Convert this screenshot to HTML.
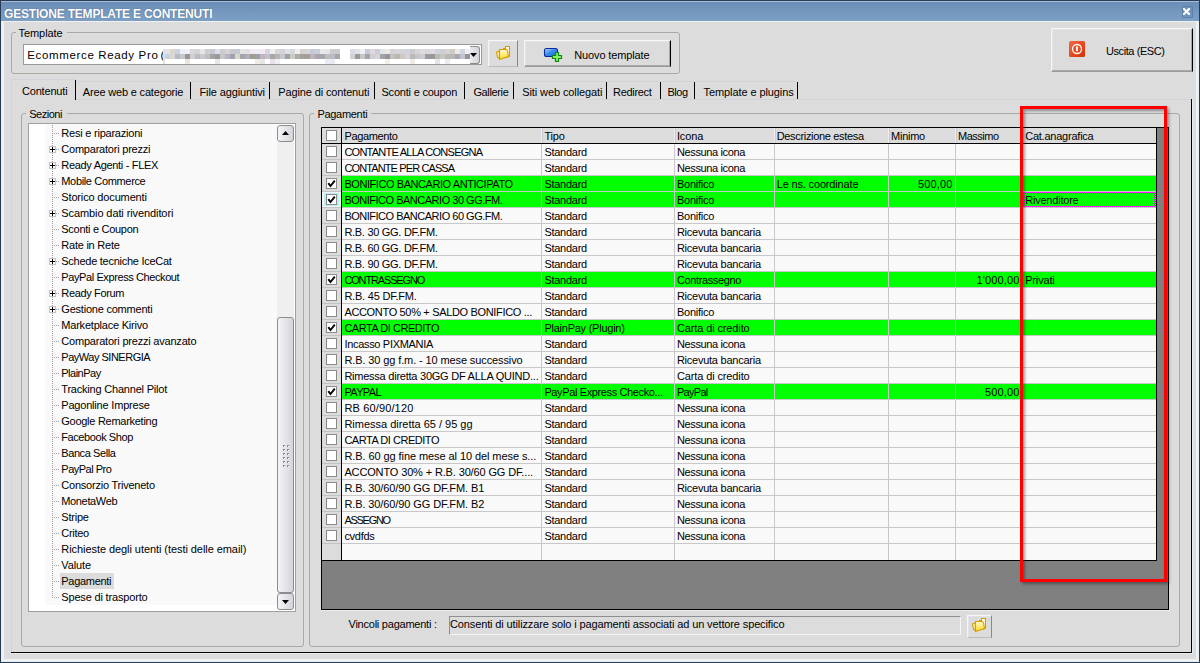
<!DOCTYPE html>
<html><head><meta charset="utf-8"><style>
html,body{margin:0;padding:0;width:1200px;height:663px;overflow:hidden;background:#dcdcdc}
div{position:absolute}
svg{position:absolute}
.t{position:absolute;white-space:pre;font-family:"Liberation Sans",sans-serif;color:#000}
</style></head><body>
<div style="left:0px;top:0px;width:1200px;height:663px;background:#283c54"></div>
<div style="left:1px;top:1px;width:1198px;height:661px;background:#f1f1f1"></div>
<div style="left:1px;top:1px;width:1198px;height:1px;background:#a9bdd6"></div>
<div style="left:1px;top:2px;width:1198px;height:19px;background:linear-gradient(#6a8eb7,#7da0c5)"></div>
<div style="left:1px;top:22px;width:1px;height:640px;background:#e4ecf4"></div>
<div style="left:1198px;top:22px;width:1px;height:640px;background:#e4ecf4"></div>
<div style="left:1px;top:661px;width:1198px;height:1px;background:#e4ecf4"></div>
<div style="left:4px;top:22px;width:1192px;height:637px;background:#dcdcdc"></div>
<span class="t" id="t0" style="left:4px;top:5.84px;font-size:12px;line-height:16px;color:#fff;font-weight:bold;letter-spacing:-0.189px;text-shadow:0 0 1px rgba(20,40,80,.6)">GESTIONE TEMPLATE E CONTENUTI</span>
<div style="left:1182px;top:6px;width:9px;height:10px;border:1px solid #5d7ea6;background:#6f93bc;border-radius:1px"></div>
<svg style="position:absolute;left:1183px;top:8px" width="7" height="7" viewBox="0 0 7 7"><path d="M0.9 0.9 L6.1 6.1 M6.1 0.9 L0.9 6.1" stroke="#fff" stroke-width="2.1" stroke-linecap="square"/></svg>
<div style="left:11px;top:32px;width:667px;height:40px;border:1px solid #a9a9a9;border-radius:3px"></div>
<div style="left:16px;top:28px;width:51px;height:11px;background:#dcdcdc"></div>
<span class="t" id="t1" style="left:18.5px;top:25.19px;font-size:11px;line-height:16px;color:#000;letter-spacing:-0.062px;">Template</span>
<div style="left:23px;top:44px;width:457px;height:19px;border:1px solid #999;background:#fff"></div>
<span class="t" id="t2" style="left:27.3px;top:47.02px;font-size:11.5px;line-height:16px;color:#000;letter-spacing:0.646px;">Ecommerce Ready Pro</span>
<span class="t" id="t3" style="left:160.5px;top:47.02px;font-size:11.5px;line-height:16px;color:#000;letter-spacing:0.470px;">(</span>
<div style="left:163px;top:49px;width:2px;height:15px;background:#d8e4ec"></div>
<div style="left:165px;top:49px;width:5px;height:5px;background:rgb(228,228,230)"></div>
<div style="left:165px;top:54px;width:5px;height:5px;background:rgb(209,209,211)"></div>
<div style="left:170px;top:49px;width:5px;height:5px;background:rgb(218,214,206)"></div>
<div style="left:170px;top:54px;width:5px;height:5px;background:rgb(215,215,217)"></div>
<div style="left:175px;top:49px;width:5px;height:5px;background:rgb(205,209,219)"></div>
<div style="left:175px;top:54px;width:5px;height:5px;background:rgb(182,186,196)"></div>
<div style="left:180px;top:49px;width:5px;height:5px;background:rgb(234,238,248)"></div>
<div style="left:180px;top:54px;width:5px;height:5px;background:rgb(200,200,202)"></div>
<div style="left:185px;top:49px;width:5px;height:5px;background:rgb(239,239,241)"></div>
<div style="left:185px;top:54px;width:5px;height:5px;background:rgb(151,151,153)"></div>
<div style="left:185px;top:59px;width:5px;height:5px;background:rgb(234,230,222)"></div>
<div style="left:190px;top:49px;width:5px;height:5px;background:rgb(215,215,217)"></div>
<div style="left:190px;top:54px;width:5px;height:5px;background:rgb(213,203,215)"></div>
<div style="left:195px;top:49px;width:5px;height:5px;background:rgb(212,212,214)"></div>
<div style="left:195px;top:54px;width:5px;height:5px;background:rgb(187,187,189)"></div>
<div style="left:200px;top:49px;width:5px;height:5px;background:rgb(229,229,231)"></div>
<div style="left:200px;top:54px;width:5px;height:5px;background:rgb(202,202,204)"></div>
<div style="left:205px;top:49px;width:5px;height:5px;background:rgb(205,205,207)"></div>
<div style="left:205px;top:54px;width:5px;height:5px;background:rgb(190,190,192)"></div>
<div style="left:210px;top:49px;width:5px;height:5px;background:rgb(195,199,209)"></div>
<div style="left:210px;top:54px;width:5px;height:5px;background:rgb(163,163,165)"></div>
<div style="left:215px;top:49px;width:5px;height:5px;background:rgb(218,222,232)"></div>
<div style="left:215px;top:54px;width:5px;height:5px;background:rgb(152,152,154)"></div>
<div style="left:215px;top:59px;width:5px;height:5px;background:rgb(231,231,233)"></div>
<div style="left:220px;top:49px;width:5px;height:5px;background:rgb(203,203,205)"></div>
<div style="left:220px;top:54px;width:5px;height:5px;background:rgb(200,200,202)"></div>
<div style="left:225px;top:49px;width:5px;height:5px;background:rgb(212,212,214)"></div>
<div style="left:225px;top:54px;width:5px;height:5px;background:rgb(188,178,190)"></div>
<div style="left:230px;top:49px;width:5px;height:5px;background:rgb(200,200,202)"></div>
<div style="left:230px;top:54px;width:5px;height:5px;background:rgb(159,163,173)"></div>
<div style="left:235px;top:49px;width:5px;height:5px;background:rgb(194,198,208)"></div>
<div style="left:235px;top:54px;width:5px;height:5px;background:rgb(218,214,206)"></div>
<div style="left:240px;top:49px;width:5px;height:5px;background:rgb(228,228,230)"></div>
<div style="left:240px;top:54px;width:5px;height:5px;background:rgb(166,166,168)"></div>
<div style="left:245px;top:49px;width:5px;height:5px;background:rgb(225,225,227)"></div>
<div style="left:245px;top:54px;width:5px;height:5px;background:rgb(171,175,185)"></div>
<div style="left:250px;top:49px;width:5px;height:5px;background:rgb(241,231,243)"></div>
<div style="left:250px;top:54px;width:5px;height:5px;background:rgb(158,154,146)"></div>
<div style="left:255px;top:49px;width:5px;height:5px;background:rgb(238,238,240)"></div>
<div style="left:255px;top:54px;width:5px;height:5px;background:rgb(156,160,170)"></div>
<div style="left:255px;top:59px;width:5px;height:5px;background:rgb(241,237,229)"></div>
<div style="left:260px;top:49px;width:5px;height:5px;background:rgb(243,233,245)"></div>
<div style="left:260px;top:54px;width:5px;height:5px;background:rgb(191,181,193)"></div>
<div style="left:260px;top:59px;width:5px;height:5px;background:rgb(231,231,233)"></div>
<div style="left:265px;top:49px;width:5px;height:5px;background:rgb(209,213,223)"></div>
<div style="left:265px;top:54px;width:5px;height:5px;background:rgb(201,191,203)"></div>
<div style="left:270px;top:49px;width:5px;height:5px;background:rgb(237,237,239)"></div>
<div style="left:270px;top:54px;width:5px;height:5px;background:rgb(167,167,169)"></div>
<div style="left:270px;top:59px;width:5px;height:5px;background:rgb(234,224,236)"></div>
<div style="left:275px;top:49px;width:5px;height:5px;background:rgb(214,214,216)"></div>
<div style="left:275px;top:54px;width:5px;height:5px;background:rgb(181,181,183)"></div>
<div style="left:275px;top:59px;width:5px;height:5px;background:rgb(238,238,240)"></div>
<div style="left:280px;top:49px;width:5px;height:5px;background:rgb(212,212,214)"></div>
<div style="left:280px;top:54px;width:5px;height:5px;background:rgb(199,199,201)"></div>
<div style="left:285px;top:49px;width:5px;height:5px;background:rgb(220,224,234)"></div>
<div style="left:285px;top:54px;width:5px;height:5px;background:rgb(157,161,171)"></div>
<div style="left:290px;top:49px;width:5px;height:5px;background:rgb(215,215,217)"></div>
<div style="left:290px;top:54px;width:5px;height:5px;background:rgb(206,202,194)"></div>
<div style="left:295px;top:49px;width:5px;height:5px;background:rgb(238,238,240)"></div>
<div style="left:295px;top:54px;width:5px;height:5px;background:rgb(172,172,174)"></div>
<div style="left:300px;top:49px;width:5px;height:5px;background:rgb(214,210,202)"></div>
<div style="left:300px;top:54px;width:5px;height:5px;background:rgb(165,161,153)"></div>
<div style="left:305px;top:49px;width:5px;height:5px;background:rgb(213,213,215)"></div>
<div style="left:305px;top:54px;width:5px;height:5px;background:rgb(164,160,152)"></div>
<div style="left:310px;top:49px;width:5px;height:5px;background:rgb(197,201,211)"></div>
<div style="left:310px;top:54px;width:5px;height:5px;background:rgb(190,180,192)"></div>
<div style="left:315px;top:49px;width:5px;height:5px;background:rgb(202,206,216)"></div>
<div style="left:315px;top:54px;width:5px;height:5px;background:rgb(167,167,169)"></div>
<div style="left:320px;top:49px;width:5px;height:5px;background:rgb(233,233,235)"></div>
<div style="left:320px;top:54px;width:5px;height:5px;background:rgb(167,167,169)"></div>
<div style="left:325px;top:49px;width:5px;height:5px;background:rgb(230,230,232)"></div>
<div style="left:325px;top:54px;width:5px;height:5px;background:rgb(189,189,191)"></div>
<div style="left:325px;top:59px;width:5px;height:5px;background:rgb(232,236,246)"></div>
<div style="left:330px;top:49px;width:5px;height:5px;background:rgb(204,204,206)"></div>
<div style="left:330px;top:54px;width:5px;height:5px;background:rgb(184,188,198)"></div>
<div style="left:330px;top:59px;width:5px;height:5px;background:rgb(235,235,237)"></div>
<div style="left:335px;top:49px;width:5px;height:5px;background:rgb(202,202,204)"></div>
<div style="left:335px;top:54px;width:5px;height:5px;background:rgb(166,166,168)"></div>
<div style="left:350px;top:49px;width:5px;height:5px;background:rgb(216,220,230)"></div>
<div style="left:350px;top:54px;width:5px;height:5px;background:rgb(210,210,212)"></div>
<div style="left:355px;top:49px;width:5px;height:5px;background:rgb(226,226,228)"></div>
<div style="left:355px;top:54px;width:5px;height:5px;background:rgb(153,153,155)"></div>
<div style="left:360px;top:49px;width:5px;height:5px;background:rgb(239,239,241)"></div>
<div style="left:360px;top:54px;width:5px;height:5px;background:rgb(198,198,200)"></div>
<div style="left:365px;top:49px;width:5px;height:5px;background:rgb(199,203,213)"></div>
<div style="left:365px;top:54px;width:5px;height:5px;background:rgb(164,164,166)"></div>
<div style="left:370px;top:49px;width:5px;height:5px;background:rgb(225,215,227)"></div>
<div style="left:370px;top:54px;width:5px;height:5px;background:rgb(208,208,210)"></div>
<div style="left:375px;top:49px;width:5px;height:5px;background:rgb(205,205,207)"></div>
<div style="left:375px;top:54px;width:5px;height:5px;background:rgb(209,213,223)"></div>
<div style="left:380px;top:49px;width:5px;height:5px;background:rgb(224,228,238)"></div>
<div style="left:380px;top:54px;width:5px;height:5px;background:rgb(164,164,166)"></div>
<div style="left:385px;top:49px;width:5px;height:5px;background:rgb(237,233,225)"></div>
<div style="left:385px;top:54px;width:5px;height:5px;background:rgb(155,145,157)"></div>
<div style="left:385px;top:59px;width:5px;height:5px;background:rgb(243,239,231)"></div>
<div style="left:390px;top:49px;width:5px;height:5px;background:rgb(210,210,212)"></div>
<div style="left:390px;top:54px;width:5px;height:5px;background:rgb(193,193,195)"></div>
<div style="left:395px;top:49px;width:5px;height:5px;background:rgb(219,209,221)"></div>
<div style="left:395px;top:54px;width:5px;height:5px;background:rgb(188,184,176)"></div>
<div style="left:400px;top:49px;width:5px;height:5px;background:rgb(212,212,214)"></div>
<div style="left:400px;top:54px;width:5px;height:5px;background:rgb(205,201,193)"></div>
<div style="left:405px;top:49px;width:5px;height:5px;background:rgb(207,211,221)"></div>
<div style="left:405px;top:54px;width:5px;height:5px;background:rgb(217,207,219)"></div>
<div style="left:410px;top:49px;width:5px;height:5px;background:rgb(202,202,204)"></div>
<div style="left:410px;top:54px;width:5px;height:5px;background:rgb(185,185,187)"></div>
<div style="left:410px;top:59px;width:5px;height:5px;background:rgb(241,237,229)"></div>
<div style="left:415px;top:49px;width:5px;height:5px;background:rgb(213,213,215)"></div>
<div style="left:415px;top:54px;width:5px;height:5px;background:rgb(198,198,200)"></div>
<div style="left:420px;top:49px;width:5px;height:5px;background:rgb(220,220,222)"></div>
<div style="left:420px;top:54px;width:5px;height:5px;background:rgb(211,201,213)"></div>
<div style="left:425px;top:49px;width:5px;height:5px;background:rgb(217,217,219)"></div>
<div style="left:425px;top:54px;width:5px;height:5px;background:rgb(155,155,157)"></div>
<div style="left:430px;top:49px;width:5px;height:5px;background:rgb(226,216,228)"></div>
<div style="left:430px;top:54px;width:5px;height:5px;background:rgb(152,152,154)"></div>
<div style="left:435px;top:49px;width:5px;height:5px;background:rgb(206,210,220)"></div>
<div style="left:435px;top:54px;width:5px;height:5px;background:rgb(190,186,178)"></div>
<div style="left:435px;top:59px;width:5px;height:5px;background:rgb(228,228,230)"></div>
<div style="left:440px;top:49px;width:5px;height:5px;background:rgb(207,207,209)"></div>
<div style="left:440px;top:54px;width:5px;height:5px;background:rgb(197,197,199)"></div>
<div style="left:445px;top:49px;width:5px;height:5px;background:rgb(212,212,214)"></div>
<div style="left:445px;top:54px;width:5px;height:5px;background:rgb(188,184,176)"></div>
<div style="left:445px;top:59px;width:5px;height:5px;background:rgb(235,235,237)"></div>
<div style="left:450px;top:49px;width:5px;height:5px;background:rgb(208,204,196)"></div>
<div style="left:450px;top:54px;width:5px;height:5px;background:rgb(184,184,186)"></div>
<div style="left:455px;top:49px;width:5px;height:5px;background:rgb(233,233,235)"></div>
<div style="left:455px;top:54px;width:5px;height:5px;background:rgb(174,164,176)"></div>
<div style="left:460px;top:49px;width:5px;height:5px;background:rgb(208,212,222)"></div>
<div style="left:460px;top:54px;width:5px;height:5px;background:rgb(193,197,207)"></div>
<div style="left:465px;top:49px;width:5px;height:5px;background:rgb(240,240,242)"></div>
<div style="left:465px;top:54px;width:5px;height:5px;background:rgb(154,144,156)"></div>
<div style="left:470px;top:46px;width:9px;height:16px;border:1px solid #8c8c8c;border-left:none;border-radius:0 3px 3px 0;background:linear-gradient(90deg,#ececf0,#d2d2d8)"></div>
<svg style="position:absolute;left:470px;top:53px" width="7" height="4"><path d="M0 0 H7 L3.5 4 Z" fill="#000"/></svg>
<div style="left:488px;top:40px;width:30px;height:27px;background:#dcdcdc;border-top:1px solid #f6f6f6;border-left:1px solid #f6f6f6;border-right:1px solid #888;border-bottom:1px solid #bcbcbc;box-sizing:border-box;box-shadow:inset 1px 1px 0 #e2e2ea"></div>
<svg style="position:absolute;left:495px;top:45px" width="16" height="16" viewBox="0 0 16 16">
<defs><linearGradient id="fg1" x1="0" y1="0" x2="0" y2="1"><stop offset="0" stop-color="#fff8d0"/><stop offset=".45" stop-color="#ffec80"/><stop offset="1" stop-color="#ffd820"/></linearGradient></defs>
<path d="M8.5 3.5 H10.5 V1.5 H14.5 V11.5 L9 12.5 Z" fill="#fffbe8" stroke="#d49c00" stroke-width="1.1" stroke-linejoin="round"/>
<path d="M1.5 7 L4.5 6 L4.5 13.5 L2.5 12 Z" fill="#fff2a8" stroke="#d49c00" stroke-width="1.1" stroke-linejoin="round"/>
<path d="M4.5 4.5 H11.5 L12.5 6 L13.5 11.5 L4.5 14.5 Z" fill="url(#fg1)" stroke="#d49c00" stroke-width="1.1" stroke-linejoin="round"/>
</svg>
<div style="left:524px;top:40px;width:147px;height:27px;background:#dcdcdc;border-top:1px solid #f6f6f6;border-left:1px solid #f6f6f6;border-right:1px solid #000;border-bottom:1px solid #9a9a9a;box-sizing:border-box;box-shadow:inset -1px -1px 0 #a8a8a8, inset 1px 1px 0 #e4e4e8"></div>
<svg style="position:absolute;left:543px;top:47px" width="20" height="16" viewBox="0 0 20 16">
<defs><linearGradient id="mon" x1="0" y1="0" x2="1" y2="1"><stop offset="0" stop-color="#b8dcff"/><stop offset=".45" stop-color="#3f8ef0"/><stop offset="1" stop-color="#1a5fd8"/></linearGradient></defs>
<rect x="1.5" y="1.5" width="13" height="8" rx="2" fill="url(#mon)" stroke="#0b2a9c" stroke-width="1.1"/>
<path d="M12.5 5.5 h3 v3 h3 v3 h-3 v3 h-3 v-3 h-3 v-3 h3 z" fill="#8ef066" stroke="#0a8a0a" stroke-width="1.2"/>
</svg>
<span class="t" id="t4" style="left:574.3px;top:47.19px;font-size:11px;line-height:16px;color:#000;letter-spacing:-0.137px;">Nuovo template</span>
<div style="left:1051px;top:28px;width:142px;height:44px;background:#dcdcdc;border-top:1px solid #f6f6f6;border-left:1px solid #f6f6f6;border-right:1px solid #000;border-bottom:1px solid #9a9a9a;box-sizing:border-box;box-shadow:inset -1px -1px 0 #a8a8a8, inset 1px 1px 0 #e4e4e8"></div>
<svg style="position:absolute;left:1069px;top:41px" width="16" height="16" viewBox="0 0 16 16">
<defs><linearGradient id="red" x1="0" y1="0" x2="1" y2="1"><stop offset="0" stop-color="#f26848"/><stop offset=".6" stop-color="#e4461c"/><stop offset="1" stop-color="#cc3208"/></linearGradient></defs>
<rect x="0" y="0" width="16" height="16" rx="1.5" fill="url(#red)"/>
<circle cx="8" cy="8" r="4.5" fill="none" stroke="#fff" stroke-width="1.3"/>
<rect x="7.1" y="5.4" width="1.8" height="4.8" fill="#fff"/>
</svg>
<span class="t" id="t5" style="left:1106px;top:43.19px;font-size:11px;line-height:16px;color:#000;letter-spacing:-0.423px;">Uscita (ESC)</span>
<div style="left:11px;top:99px;width:1181px;height:1px;background:#d2d2da"></div>
<div style="left:11px;top:99px;width:1px;height:554px;background:#d2d2da"></div>
<div style="left:1191px;top:99px;width:1px;height:554px;background:#000"></div>
<div style="left:1192px;top:99px;width:1px;height:555px;background:#ececec"></div>
<div style="left:11px;top:652px;width:1181px;height:1px;background:#000"></div>
<div style="left:11px;top:653px;width:1182px;height:1px;background:#ececec"></div>
<div style="left:11px;top:80px;width:64px;height:20px;background:#dcdcdc"></div>
<div style="left:11px;top:79px;width:64px;height:30px;border-top:1px solid #d2d2da;border-left:1px solid #d2d2da;border-radius:3px 0 0 0;box-sizing:border-box"></div>
<div style="left:12px;top:99px;width:63px;height:1px;background:#dcdcdc"></div>
<div style="left:75px;top:80px;width:1px;height:20px;background:#000"></div>
<span class="t" id="t6" style="left:22px;top:83.19px;font-size:11px;line-height:16px;color:#000;letter-spacing:-0.189px;">Contenuti</span>
<div style="left:76px;top:81px;width:114px;height:1px;background:#d2d2da"></div>
<div style="left:190px;top:82px;width:1px;height:17px;background:#000"></div>
<span class="t" id="t7" style="left:82.8px;top:84.19px;font-size:11px;line-height:16px;color:#000;letter-spacing:-0.173px;">Aree web e categorie</span>
<div style="left:191px;top:81px;width:78px;height:1px;background:#d2d2da"></div>
<div style="left:269px;top:82px;width:1px;height:17px;background:#000"></div>
<span class="t" id="t8" style="left:199.5px;top:84.19px;font-size:11px;line-height:16px;color:#000;letter-spacing:-0.124px;">File aggiuntivi</span>
<div style="left:270px;top:81px;width:104px;height:1px;background:#d2d2da"></div>
<div style="left:374px;top:82px;width:1px;height:17px;background:#000"></div>
<span class="t" id="t9" style="left:278.3px;top:84.19px;font-size:11px;line-height:16px;color:#000;letter-spacing:-0.134px;">Pagine di contenuti</span>
<div style="left:375px;top:81px;width:89px;height:1px;background:#d2d2da"></div>
<div style="left:464px;top:82px;width:1px;height:17px;background:#000"></div>
<span class="t" id="t10" style="left:381.5px;top:84.19px;font-size:11px;line-height:16px;color:#000;letter-spacing:-0.214px;">Sconti e coupon</span>
<div style="left:465px;top:81px;width:48px;height:1px;background:#d2d2da"></div>
<div style="left:513px;top:82px;width:1px;height:17px;background:#000"></div>
<span class="t" id="t11" style="left:473.4px;top:84.19px;font-size:11px;line-height:16px;color:#000;letter-spacing:-0.352px;">Gallerie</span>
<div style="left:514px;top:81px;width:92px;height:1px;background:#d2d2da"></div>
<div style="left:606px;top:82px;width:1px;height:17px;background:#000"></div>
<span class="t" id="t12" style="left:522.3px;top:84.19px;font-size:11px;line-height:16px;color:#000;letter-spacing:-0.108px;">Siti web collegati</span>
<div style="left:607px;top:81px;width:53px;height:1px;background:#d2d2da"></div>
<div style="left:660px;top:82px;width:1px;height:17px;background:#000"></div>
<span class="t" id="t13" style="left:613px;top:84.19px;font-size:11px;line-height:16px;color:#000;letter-spacing:-0.301px;">Redirect</span>
<div style="left:661px;top:81px;width:33px;height:1px;background:#d2d2da"></div>
<div style="left:694px;top:82px;width:1px;height:17px;background:#000"></div>
<span class="t" id="t14" style="left:667.4px;top:84.19px;font-size:11px;line-height:16px;color:#000;letter-spacing:-0.434px;">Blog</span>
<div style="left:695px;top:81px;width:102px;height:1px;background:#d2d2da"></div>
<div style="left:797px;top:82px;width:1px;height:17px;background:#000"></div>
<span class="t" id="t15" style="left:703.5px;top:84.19px;font-size:11px;line-height:16px;color:#000;letter-spacing:-0.087px;">Template e plugins</span>
<div style="left:21px;top:113px;width:281px;height:532px;border:1px solid #a9a9a9;border-radius:3px"></div>
<div style="left:26px;top:108px;width:41px;height:12px;background:#dcdcdc"></div>
<span class="t" id="t16" style="left:29.2px;top:106.19px;font-size:11px;line-height:16px;color:#000;letter-spacing:-0.473px;">Sezioni</span>
<div style="left:28px;top:123px;width:268px;height:489px;border:1px solid #a0a0a0;background:#f9f9f9;box-sizing:border-box"></div>
<div style="left:29px;top:124px;width:16px;height:487px;background:#ffffff"></div>
<div style="left:29px;top:605px;width:266px;height:6px;background:#ffffff"></div>
<div style="left:277px;top:124px;width:18px;height:487px;background:#ffffff"></div>
<div style="left:277px;top:142px;width:17px;height:451px;background:#efefef"></div>
<div style="left:277px;top:125px;width:17px;height:17px;border:1px solid #8c8c8c;border-radius:3px;box-sizing:border-box;background:linear-gradient(90deg,#f4f4f8,#d4d4da)"></div>
<svg style="position:absolute;left:282px;top:131px" width="7" height="4"><path d="M0 4 H7 L3.5 0 Z" fill="#000"/></svg>
<div style="left:277px;top:317px;width:17px;height:276px;border:1px solid #8c8c8c;border-radius:3px;box-sizing:border-box;background:linear-gradient(90deg,#f4f4f8,#d4d4da)"></div>
<div style="left:283px;top:445px;width:2px;height:1px;background:#8a8a8a"></div>
<div style="left:283px;top:445px;width:1px;height:2px;background:#8a8a8a"></div>
<div style="left:284px;top:446px;width:1px;height:1px;background:#ffffff"></div>
<div style="left:287px;top:445px;width:2px;height:1px;background:#8a8a8a"></div>
<div style="left:287px;top:445px;width:1px;height:2px;background:#8a8a8a"></div>
<div style="left:288px;top:446px;width:1px;height:1px;background:#ffffff"></div>
<div style="left:283px;top:449px;width:2px;height:1px;background:#8a8a8a"></div>
<div style="left:283px;top:449px;width:1px;height:2px;background:#8a8a8a"></div>
<div style="left:284px;top:450px;width:1px;height:1px;background:#ffffff"></div>
<div style="left:287px;top:449px;width:2px;height:1px;background:#8a8a8a"></div>
<div style="left:287px;top:449px;width:1px;height:2px;background:#8a8a8a"></div>
<div style="left:288px;top:450px;width:1px;height:1px;background:#ffffff"></div>
<div style="left:283px;top:453px;width:2px;height:1px;background:#8a8a8a"></div>
<div style="left:283px;top:453px;width:1px;height:2px;background:#8a8a8a"></div>
<div style="left:284px;top:454px;width:1px;height:1px;background:#ffffff"></div>
<div style="left:287px;top:453px;width:2px;height:1px;background:#8a8a8a"></div>
<div style="left:287px;top:453px;width:1px;height:2px;background:#8a8a8a"></div>
<div style="left:288px;top:454px;width:1px;height:1px;background:#ffffff"></div>
<div style="left:283px;top:457px;width:2px;height:1px;background:#8a8a8a"></div>
<div style="left:283px;top:457px;width:1px;height:2px;background:#8a8a8a"></div>
<div style="left:284px;top:458px;width:1px;height:1px;background:#ffffff"></div>
<div style="left:287px;top:457px;width:2px;height:1px;background:#8a8a8a"></div>
<div style="left:287px;top:457px;width:1px;height:2px;background:#8a8a8a"></div>
<div style="left:288px;top:458px;width:1px;height:1px;background:#ffffff"></div>
<div style="left:283px;top:461px;width:2px;height:1px;background:#8a8a8a"></div>
<div style="left:283px;top:461px;width:1px;height:2px;background:#8a8a8a"></div>
<div style="left:284px;top:462px;width:1px;height:1px;background:#ffffff"></div>
<div style="left:287px;top:461px;width:2px;height:1px;background:#8a8a8a"></div>
<div style="left:287px;top:461px;width:1px;height:2px;background:#8a8a8a"></div>
<div style="left:288px;top:462px;width:1px;height:1px;background:#ffffff"></div>
<div style="left:283px;top:465px;width:2px;height:1px;background:#8a8a8a"></div>
<div style="left:283px;top:465px;width:1px;height:2px;background:#8a8a8a"></div>
<div style="left:284px;top:466px;width:1px;height:1px;background:#ffffff"></div>
<div style="left:287px;top:465px;width:2px;height:1px;background:#8a8a8a"></div>
<div style="left:287px;top:465px;width:1px;height:2px;background:#8a8a8a"></div>
<div style="left:288px;top:466px;width:1px;height:1px;background:#ffffff"></div>
<div style="left:277px;top:593px;width:17px;height:17px;border:1px solid #8c8c8c;border-radius:3px;box-sizing:border-box;background:linear-gradient(90deg,#f4f4f8,#d4d4da)"></div>
<svg style="position:absolute;left:282px;top:600px" width="7" height="4"><path d="M0 0 H7 L3.5 4 Z" fill="#000"/></svg>
<div style="left:52px;top:125px;width:1px;height:473px;background:repeating-linear-gradient(180deg,#a0a0a0 0 1px,transparent 1px 2px)"></div>
<div style="left:54px;top:133px;width:6px;height:1px;background:repeating-linear-gradient(90deg,#a0a0a0 0 1px,transparent 1px 2px)"></div>
<span class="t" id="t17" style="left:61.3px;top:125.19px;font-size:11px;line-height:16px;color:#000;letter-spacing:-0.223px;">Resi e riparazioni</span>
<div style="left:54px;top:149px;width:6px;height:1px;background:repeating-linear-gradient(90deg,#a0a0a0 0 1px,transparent 1px 2px)"></div>
<div style="left:49px;top:146px;width:7px;height:7px;border:1px solid #c4c4c4;background:#fff;box-sizing:border-box"></div>
<div style="left:50px;top:149px;width:5px;height:1px;background:#000"></div>
<div style="left:52px;top:147px;width:1px;height:5px;background:#000"></div>
<span class="t" id="t18" style="left:61.3px;top:141.19px;font-size:11px;line-height:16px;color:#000;letter-spacing:-0.217px;">Comparatori prezzi</span>
<div style="left:54px;top:165px;width:6px;height:1px;background:repeating-linear-gradient(90deg,#a0a0a0 0 1px,transparent 1px 2px)"></div>
<div style="left:49px;top:162px;width:7px;height:7px;border:1px solid #c4c4c4;background:#fff;box-sizing:border-box"></div>
<div style="left:50px;top:165px;width:5px;height:1px;background:#000"></div>
<div style="left:52px;top:163px;width:1px;height:5px;background:#000"></div>
<span class="t" id="t19" style="left:61.3px;top:157.19px;font-size:11px;line-height:16px;color:#000;letter-spacing:-0.314px;">Ready Agenti - FLEX</span>
<div style="left:54px;top:181px;width:6px;height:1px;background:repeating-linear-gradient(90deg,#a0a0a0 0 1px,transparent 1px 2px)"></div>
<div style="left:49px;top:178px;width:7px;height:7px;border:1px solid #c4c4c4;background:#fff;box-sizing:border-box"></div>
<div style="left:50px;top:181px;width:5px;height:1px;background:#000"></div>
<div style="left:52px;top:179px;width:1px;height:5px;background:#000"></div>
<span class="t" id="t20" style="left:61.3px;top:173.19px;font-size:11px;line-height:16px;color:#000;letter-spacing:-0.343px;">Mobile Commerce</span>
<div style="left:54px;top:197px;width:6px;height:1px;background:repeating-linear-gradient(90deg,#a0a0a0 0 1px,transparent 1px 2px)"></div>
<span class="t" id="t21" style="left:61.3px;top:189.19px;font-size:11px;line-height:16px;color:#000;letter-spacing:-0.152px;">Storico documenti</span>
<div style="left:54px;top:213px;width:6px;height:1px;background:repeating-linear-gradient(90deg,#a0a0a0 0 1px,transparent 1px 2px)"></div>
<div style="left:49px;top:210px;width:7px;height:7px;border:1px solid #c4c4c4;background:#fff;box-sizing:border-box"></div>
<div style="left:50px;top:213px;width:5px;height:1px;background:#000"></div>
<div style="left:52px;top:211px;width:1px;height:5px;background:#000"></div>
<span class="t" id="t22" style="left:61.3px;top:205.19px;font-size:11px;line-height:16px;color:#000;letter-spacing:-0.097px;">Scambio dati rivenditori</span>
<div style="left:54px;top:229px;width:6px;height:1px;background:repeating-linear-gradient(90deg,#a0a0a0 0 1px,transparent 1px 2px)"></div>
<span class="t" id="t23" style="left:61.3px;top:221.19px;font-size:11px;line-height:16px;color:#000;letter-spacing:-0.287px;">Sconti e Coupon</span>
<div style="left:54px;top:245px;width:6px;height:1px;background:repeating-linear-gradient(90deg,#a0a0a0 0 1px,transparent 1px 2px)"></div>
<span class="t" id="t24" style="left:61.3px;top:237.19px;font-size:11px;line-height:16px;color:#000;letter-spacing:-0.239px;">Rate in Rete</span>
<div style="left:54px;top:261px;width:6px;height:1px;background:repeating-linear-gradient(90deg,#a0a0a0 0 1px,transparent 1px 2px)"></div>
<div style="left:49px;top:258px;width:7px;height:7px;border:1px solid #c4c4c4;background:#fff;box-sizing:border-box"></div>
<div style="left:50px;top:261px;width:5px;height:1px;background:#000"></div>
<div style="left:52px;top:259px;width:1px;height:5px;background:#000"></div>
<span class="t" id="t25" style="left:61.3px;top:253.19px;font-size:11px;line-height:16px;color:#000;letter-spacing:-0.265px;">Schede tecniche IceCat</span>
<div style="left:54px;top:277px;width:6px;height:1px;background:repeating-linear-gradient(90deg,#a0a0a0 0 1px,transparent 1px 2px)"></div>
<span class="t" id="t26" style="left:61.3px;top:269.19px;font-size:11px;line-height:16px;color:#000;letter-spacing:-0.401px;">PayPal Express Checkout</span>
<div style="left:54px;top:293px;width:6px;height:1px;background:repeating-linear-gradient(90deg,#a0a0a0 0 1px,transparent 1px 2px)"></div>
<div style="left:49px;top:290px;width:7px;height:7px;border:1px solid #c4c4c4;background:#fff;box-sizing:border-box"></div>
<div style="left:50px;top:293px;width:5px;height:1px;background:#000"></div>
<div style="left:52px;top:291px;width:1px;height:5px;background:#000"></div>
<span class="t" id="t27" style="left:61.3px;top:285.19px;font-size:11px;line-height:16px;color:#000;letter-spacing:-0.355px;">Ready Forum</span>
<div style="left:54px;top:309px;width:6px;height:1px;background:repeating-linear-gradient(90deg,#a0a0a0 0 1px,transparent 1px 2px)"></div>
<div style="left:49px;top:306px;width:7px;height:7px;border:1px solid #c4c4c4;background:#fff;box-sizing:border-box"></div>
<div style="left:50px;top:309px;width:5px;height:1px;background:#000"></div>
<div style="left:52px;top:307px;width:1px;height:5px;background:#000"></div>
<span class="t" id="t28" style="left:61.3px;top:301.19px;font-size:11px;line-height:16px;color:#000;letter-spacing:-0.218px;">Gestione commenti</span>
<div style="left:54px;top:325px;width:6px;height:1px;background:repeating-linear-gradient(90deg,#a0a0a0 0 1px,transparent 1px 2px)"></div>
<span class="t" id="t29" style="left:61.3px;top:317.19px;font-size:11px;line-height:16px;color:#000;letter-spacing:-0.213px;">Marketplace Kirivo</span>
<div style="left:54px;top:341px;width:6px;height:1px;background:repeating-linear-gradient(90deg,#a0a0a0 0 1px,transparent 1px 2px)"></div>
<span class="t" id="t30" style="left:61.3px;top:333.19px;font-size:11px;line-height:16px;color:#000;letter-spacing:-0.207px;">Comparatori prezzi avanzato</span>
<div style="left:54px;top:357px;width:6px;height:1px;background:repeating-linear-gradient(90deg,#a0a0a0 0 1px,transparent 1px 2px)"></div>
<span class="t" id="t31" style="left:61.3px;top:349.19px;font-size:11px;line-height:16px;color:#000;letter-spacing:-0.490px;">PayWay SINERGIA</span>
<div style="left:54px;top:373px;width:6px;height:1px;background:repeating-linear-gradient(90deg,#a0a0a0 0 1px,transparent 1px 2px)"></div>
<span class="t" id="t32" style="left:61.3px;top:365.19px;font-size:11px;line-height:16px;color:#000;letter-spacing:-0.509px;">PlainPay</span>
<div style="left:54px;top:389px;width:6px;height:1px;background:repeating-linear-gradient(90deg,#a0a0a0 0 1px,transparent 1px 2px)"></div>
<span class="t" id="t33" style="left:61.3px;top:381.19px;font-size:11px;line-height:16px;color:#000;letter-spacing:-0.207px;">Tracking Channel Pilot</span>
<div style="left:54px;top:405px;width:6px;height:1px;background:repeating-linear-gradient(90deg,#a0a0a0 0 1px,transparent 1px 2px)"></div>
<span class="t" id="t34" style="left:61.3px;top:397.19px;font-size:11px;line-height:16px;color:#000;letter-spacing:-0.198px;">Pagonline Imprese</span>
<div style="left:54px;top:421px;width:6px;height:1px;background:repeating-linear-gradient(90deg,#a0a0a0 0 1px,transparent 1px 2px)"></div>
<span class="t" id="t35" style="left:61.3px;top:413.19px;font-size:11px;line-height:16px;color:#000;letter-spacing:-0.273px;">Google Remarketing</span>
<div style="left:54px;top:437px;width:6px;height:1px;background:repeating-linear-gradient(90deg,#a0a0a0 0 1px,transparent 1px 2px)"></div>
<span class="t" id="t36" style="left:61.3px;top:429.19px;font-size:11px;line-height:16px;color:#000;letter-spacing:-0.425px;">Facebook Shop</span>
<div style="left:54px;top:453px;width:6px;height:1px;background:repeating-linear-gradient(90deg,#a0a0a0 0 1px,transparent 1px 2px)"></div>
<span class="t" id="t37" style="left:61.3px;top:445.19px;font-size:11px;line-height:16px;color:#000;letter-spacing:-0.415px;">Banca Sella</span>
<div style="left:54px;top:469px;width:6px;height:1px;background:repeating-linear-gradient(90deg,#a0a0a0 0 1px,transparent 1px 2px)"></div>
<span class="t" id="t38" style="left:61.3px;top:461.19px;font-size:11px;line-height:16px;color:#000;letter-spacing:-0.494px;">PayPal Pro</span>
<div style="left:54px;top:485px;width:6px;height:1px;background:repeating-linear-gradient(90deg,#a0a0a0 0 1px,transparent 1px 2px)"></div>
<span class="t" id="t39" style="left:61.3px;top:477.19px;font-size:11px;line-height:16px;color:#000;letter-spacing:-0.227px;">Consorzio Triveneto</span>
<div style="left:54px;top:501px;width:6px;height:1px;background:repeating-linear-gradient(90deg,#a0a0a0 0 1px,transparent 1px 2px)"></div>
<span class="t" id="t40" style="left:61.3px;top:493.19px;font-size:11px;line-height:16px;color:#000;letter-spacing:-0.357px;">MonetaWeb</span>
<div style="left:54px;top:517px;width:6px;height:1px;background:repeating-linear-gradient(90deg,#a0a0a0 0 1px,transparent 1px 2px)"></div>
<span class="t" id="t41" style="left:61.3px;top:509.19px;font-size:11px;line-height:16px;color:#000;letter-spacing:-0.229px;">Stripe</span>
<div style="left:54px;top:533px;width:6px;height:1px;background:repeating-linear-gradient(90deg,#a0a0a0 0 1px,transparent 1px 2px)"></div>
<span class="t" id="t42" style="left:61.3px;top:525.19px;font-size:11px;line-height:16px;color:#000;letter-spacing:-0.301px;">Criteo</span>
<div style="left:54px;top:549px;width:6px;height:1px;background:repeating-linear-gradient(90deg,#a0a0a0 0 1px,transparent 1px 2px)"></div>
<span class="t" id="t43" style="left:61.3px;top:541.19px;font-size:11px;line-height:16px;color:#000;letter-spacing:-0.065px;">Richieste degli utenti (testi delle email)</span>
<div style="left:54px;top:565px;width:6px;height:1px;background:repeating-linear-gradient(90deg,#a0a0a0 0 1px,transparent 1px 2px)"></div>
<span class="t" id="t44" style="left:61.3px;top:557.19px;font-size:11px;line-height:16px;color:#000;letter-spacing:-0.098px;">Valute</span>
<div style="left:54px;top:581px;width:6px;height:1px;background:repeating-linear-gradient(90deg,#a0a0a0 0 1px,transparent 1px 2px)"></div>
<div style="left:60px;top:573px;width:54px;height:16px;background:#dcdcdc"></div>
<span class="t" id="t45" style="left:61.3px;top:573.19px;font-size:11px;line-height:16px;color:#000;letter-spacing:-0.295px;">Pagamenti</span>
<div style="left:54px;top:597px;width:6px;height:1px;background:repeating-linear-gradient(90deg,#a0a0a0 0 1px,transparent 1px 2px)"></div>
<span class="t" id="t46" style="left:61.3px;top:589.19px;font-size:11px;line-height:16px;color:#000;letter-spacing:-0.172px;">Spese di trasporto</span>
<div style="left:309px;top:113px;width:869px;height:532px;border:1px solid #a9a9a9;border-radius:3px"></div>
<div style="left:314px;top:108px;width:57px;height:12px;background:#dcdcdc"></div>
<span class="t" id="t47" style="left:317.4px;top:106.19px;font-size:11px;line-height:16px;color:#000;letter-spacing:-0.295px;">Pagamenti</span>
<div style="left:321px;top:127px;width:848px;height:483px;background:#000"></div>
<div style="left:322px;top:128px;width:846px;height:481px;background:#808080"></div>
<div style="left:321px;top:610px;width:849px;height:1px;background:#ececec"></div>
<div style="left:322px;top:128px;width:834px;height:15px;background:#dcdcdc"></div>
<div style="left:322px;top:143px;width:835px;height:1px;background:#000"></div>
<div style="left:1156px;top:128px;width:1px;height:433px;background:#000"></div>
<div style="left:322px;top:560px;width:835px;height:1px;background:#000"></div>
<div style="left:322px;top:144px;width:19px;height:416px;background:#dcdcdc"></div>
<div style="left:341px;top:128px;width:1px;height:432px;background:#000"></div>
<div style="left:342px;top:144px;width:814px;height:416px;background:#f9f9f9"></div>
<span class="t" id="t48" style="left:344.4px;top:128.19px;font-size:11px;line-height:16px;color:#000;letter-spacing:-0.337px;">Pagamento</span>
<div style="left:541px;top:128px;width:1px;height:15px;background:#eeeeee"></div>
<div style="left:542px;top:128px;width:1px;height:15px;background:#c8c8d0"></div>
<span class="t" id="t49" style="left:544.4px;top:128.19px;font-size:11px;line-height:16px;color:#000;letter-spacing:-0.206px;">Tipo</span>
<div style="left:674px;top:128px;width:1px;height:15px;background:#eeeeee"></div>
<div style="left:675px;top:128px;width:1px;height:15px;background:#c8c8d0"></div>
<span class="t" id="t50" style="left:676.9px;top:128.19px;font-size:11px;line-height:16px;color:#000;letter-spacing:-0.087px;">Icona</span>
<div style="left:774px;top:128px;width:1px;height:15px;background:#eeeeee"></div>
<div style="left:775px;top:128px;width:1px;height:15px;background:#c8c8d0"></div>
<span class="t" id="t51" style="left:776.7px;top:128.19px;font-size:11px;line-height:16px;color:#000;letter-spacing:-0.327px;">Descrizione estesa</span>
<div style="left:888px;top:128px;width:1px;height:15px;background:#eeeeee"></div>
<div style="left:889px;top:128px;width:1px;height:15px;background:#c8c8d0"></div>
<span class="t" id="t52" style="left:891.1px;top:128.19px;font-size:11px;line-height:16px;color:#000;letter-spacing:-0.268px;">Minimo</span>
<div style="left:955px;top:128px;width:1px;height:15px;background:#eeeeee"></div>
<div style="left:956px;top:128px;width:1px;height:15px;background:#c8c8d0"></div>
<span class="t" id="t53" style="left:958.1px;top:128.19px;font-size:11px;line-height:16px;color:#000;letter-spacing:-0.510px;">Massimo</span>
<div style="left:1022px;top:128px;width:1px;height:15px;background:#eeeeee"></div>
<div style="left:1023px;top:128px;width:1px;height:15px;background:#c8c8d0"></div>
<span class="t" id="t54" style="left:1025.2px;top:128.19px;font-size:11px;line-height:16px;color:#000;letter-spacing:-0.231px;">Cat.anagrafica</span>
<div style="left:326px;top:130px;width:11px;height:11px;border:1px solid #8a8a8a;background:#fff;box-sizing:border-box"></div>
<div style="left:326px;top:146px;width:11px;height:11px;border:1px solid #8a8a8a;background:#fff;box-sizing:border-box"></div>
<span class="t" id="t55" style="left:344.4px;top:144.19px;font-size:11px;line-height:16px;color:#000;letter-spacing:-0.752px;">CONTANTE ALLA CONSEGNA</span>
<span class="t" id="t56" style="left:544.4px;top:144.19px;font-size:11px;line-height:16px;color:#000;letter-spacing:-0.263px;">Standard</span>
<span class="t" id="t57" style="left:676.9px;top:144.19px;font-size:11px;line-height:16px;color:#000;letter-spacing:-0.355px;">Nessuna icona</span>
<div style="left:322px;top:159px;width:19px;height:1px;background:#c4c4c4"></div>
<div style="left:342px;top:159px;width:814px;height:1px;background:#c8c8c8"></div>
<div style="left:541px;top:144px;width:1px;height:16px;background:#c8c8c8"></div>
<div style="left:674px;top:144px;width:1px;height:16px;background:#c8c8c8"></div>
<div style="left:774px;top:144px;width:1px;height:16px;background:#c8c8c8"></div>
<div style="left:888px;top:144px;width:1px;height:16px;background:#c8c8c8"></div>
<div style="left:955px;top:144px;width:1px;height:16px;background:#c8c8c8"></div>
<div style="left:1022px;top:144px;width:1px;height:16px;background:#c8c8c8"></div>
<div style="left:326px;top:162px;width:11px;height:11px;border:1px solid #8a8a8a;background:#fff;box-sizing:border-box"></div>
<span class="t" id="t58" style="left:344.4px;top:160.19px;font-size:11px;line-height:16px;color:#000;letter-spacing:-0.878px;">CONTANTE PER CASSA</span>
<span class="t" id="t59" style="left:544.4px;top:160.19px;font-size:11px;line-height:16px;color:#000;letter-spacing:-0.263px;">Standard</span>
<span class="t" id="t60" style="left:676.9px;top:160.19px;font-size:11px;line-height:16px;color:#000;letter-spacing:-0.355px;">Nessuna icona</span>
<div style="left:322px;top:175px;width:19px;height:1px;background:#c4c4c4"></div>
<div style="left:342px;top:175px;width:814px;height:1px;background:#c8c8c8"></div>
<div style="left:541px;top:160px;width:1px;height:16px;background:#c8c8c8"></div>
<div style="left:674px;top:160px;width:1px;height:16px;background:#c8c8c8"></div>
<div style="left:774px;top:160px;width:1px;height:16px;background:#c8c8c8"></div>
<div style="left:888px;top:160px;width:1px;height:16px;background:#c8c8c8"></div>
<div style="left:955px;top:160px;width:1px;height:16px;background:#c8c8c8"></div>
<div style="left:1022px;top:160px;width:1px;height:16px;background:#c8c8c8"></div>
<div style="left:342px;top:176px;width:814px;height:15px;background:#00ff00"></div>
<div style="left:326px;top:178px;width:11px;height:11px;border:1px solid #8a8a8a;background:#fff;box-sizing:border-box"></div>
<svg style="position:absolute;left:326px;top:178px" width="11" height="11"><path d="M2.3 5.2 L4.5 8 L8.8 2.6" fill="none" stroke="#000" stroke-width="1.9"/></svg>
<span class="t" id="t61" style="left:344.4px;top:176.19px;font-size:11px;line-height:16px;color:#000;letter-spacing:-0.431px;">BONIFICO BANCARIO ANTICIPATO</span>
<span class="t" id="t62" style="left:544.4px;top:176.19px;font-size:11px;line-height:16px;color:#000;letter-spacing:-0.263px;">Standard</span>
<span class="t" id="t63" style="left:676.9px;top:176.19px;font-size:11px;line-height:16px;color:#000;letter-spacing:-0.223px;">Bonifico</span>
<span class="t" id="t64" style="left:776.7px;top:176.19px;font-size:11px;line-height:16px;color:#000;letter-spacing:-0.161px;">Le ns. coordinate</span>
<span class="t" id="t65" style="right:247.39999999999998px;top:176.19px;font-size:11px;line-height:16px;color:#000;letter-spacing:0.160px;">500,00</span>
<div style="left:322px;top:191px;width:19px;height:1px;background:#c4c4c4"></div>
<div style="left:342px;top:191px;width:814px;height:1px;background:#c8c8c8"></div>
<div style="left:541px;top:176px;width:1px;height:16px;background:#c8c8c8"></div>
<div style="left:674px;top:176px;width:1px;height:16px;background:#c8c8c8"></div>
<div style="left:774px;top:176px;width:1px;height:16px;background:#c8c8c8"></div>
<div style="left:888px;top:176px;width:1px;height:16px;background:#c8c8c8"></div>
<div style="left:955px;top:176px;width:1px;height:16px;background:#c8c8c8"></div>
<div style="left:1022px;top:176px;width:1px;height:16px;background:#c8c8c8"></div>
<div style="left:342px;top:192px;width:814px;height:15px;background:#00ff00"></div>
<div style="left:324px;top:192px;width:15px;height:15px;background:#b4eef2"></div>
<div style="left:326px;top:194px;width:11px;height:11px;border:1px solid #8a8a8a;background:#fff;box-sizing:border-box"></div>
<svg style="position:absolute;left:326px;top:194px" width="11" height="11"><path d="M2.3 5.2 L4.5 8 L8.8 2.6" fill="none" stroke="#000" stroke-width="1.9"/></svg>
<div style="left:322px;top:192px;width:19px;height:15px;background:#f4f4f4"></div>
<div style="left:324px;top:193px;width:15px;height:13px;background:#b8f0f4"></div>
<div style="left:326px;top:194px;width:11px;height:11px;border:1px solid #8a8a8a;background:#fff;box-sizing:border-box"></div>
<svg style="position:absolute;left:326px;top:194px" width="11" height="11"><path d="M2.3 5.2 L4.5 8 L8.8 2.6" fill="none" stroke="#000" stroke-width="1.9"/></svg>
<div style="left:1023px;top:192px;width:133px;height:16px;background:repeating-conic-gradient(#ff00ff 0 25%, #00ff00 0 50%) 0 0/2px 2px"></div>
<div style="left:1025px;top:194px;width:129px;height:12px;background:#00ff00"></div>
<span class="t" id="t66" style="left:344.4px;top:192.19px;font-size:11px;line-height:16px;color:#000;letter-spacing:-0.493px;">BONIFICO BANCARIO 30 GG.FM.</span>
<span class="t" id="t67" style="left:544.4px;top:192.19px;font-size:11px;line-height:16px;color:#000;letter-spacing:-0.263px;">Standard</span>
<span class="t" id="t68" style="left:676.9px;top:192.19px;font-size:11px;line-height:16px;color:#000;letter-spacing:-0.223px;">Bonifico</span>
<span class="t" id="t69" style="left:1025.2px;top:192.19px;font-size:11px;line-height:16px;color:#000;letter-spacing:-0.213px;">Rivenditore</span>
<div style="left:322px;top:207px;width:19px;height:1px;background:#c4c4c4"></div>
<div style="left:342px;top:207px;width:814px;height:1px;background:#c8c8c8"></div>
<div style="left:541px;top:192px;width:1px;height:16px;background:#c8c8c8"></div>
<div style="left:674px;top:192px;width:1px;height:16px;background:#c8c8c8"></div>
<div style="left:774px;top:192px;width:1px;height:16px;background:#c8c8c8"></div>
<div style="left:888px;top:192px;width:1px;height:16px;background:#c8c8c8"></div>
<div style="left:955px;top:192px;width:1px;height:16px;background:#c8c8c8"></div>
<div style="left:1022px;top:192px;width:1px;height:16px;background:#c8c8c8"></div>
<div style="left:326px;top:210px;width:11px;height:11px;border:1px solid #8a8a8a;background:#fff;box-sizing:border-box"></div>
<span class="t" id="t70" style="left:344.4px;top:208.19px;font-size:11px;line-height:16px;color:#000;letter-spacing:-0.493px;">BONIFICO BANCARIO 60 GG.FM.</span>
<span class="t" id="t71" style="left:544.4px;top:208.19px;font-size:11px;line-height:16px;color:#000;letter-spacing:-0.263px;">Standard</span>
<span class="t" id="t72" style="left:676.9px;top:208.19px;font-size:11px;line-height:16px;color:#000;letter-spacing:-0.223px;">Bonifico</span>
<div style="left:322px;top:223px;width:19px;height:1px;background:#c4c4c4"></div>
<div style="left:342px;top:223px;width:814px;height:1px;background:#c8c8c8"></div>
<div style="left:541px;top:208px;width:1px;height:16px;background:#c8c8c8"></div>
<div style="left:674px;top:208px;width:1px;height:16px;background:#c8c8c8"></div>
<div style="left:774px;top:208px;width:1px;height:16px;background:#c8c8c8"></div>
<div style="left:888px;top:208px;width:1px;height:16px;background:#c8c8c8"></div>
<div style="left:955px;top:208px;width:1px;height:16px;background:#c8c8c8"></div>
<div style="left:1022px;top:208px;width:1px;height:16px;background:#c8c8c8"></div>
<div style="left:326px;top:226px;width:11px;height:11px;border:1px solid #8a8a8a;background:#fff;box-sizing:border-box"></div>
<span class="t" id="t73" style="left:344.4px;top:224.19px;font-size:11px;line-height:16px;color:#000;letter-spacing:-0.287px;">R.B. 30 GG. DF.FM.</span>
<span class="t" id="t74" style="left:544.4px;top:224.19px;font-size:11px;line-height:16px;color:#000;letter-spacing:-0.263px;">Standard</span>
<span class="t" id="t75" style="left:676.9px;top:224.19px;font-size:11px;line-height:16px;color:#000;letter-spacing:-0.244px;">Ricevuta bancaria</span>
<div style="left:322px;top:239px;width:19px;height:1px;background:#c4c4c4"></div>
<div style="left:342px;top:239px;width:814px;height:1px;background:#c8c8c8"></div>
<div style="left:541px;top:224px;width:1px;height:16px;background:#c8c8c8"></div>
<div style="left:674px;top:224px;width:1px;height:16px;background:#c8c8c8"></div>
<div style="left:774px;top:224px;width:1px;height:16px;background:#c8c8c8"></div>
<div style="left:888px;top:224px;width:1px;height:16px;background:#c8c8c8"></div>
<div style="left:955px;top:224px;width:1px;height:16px;background:#c8c8c8"></div>
<div style="left:1022px;top:224px;width:1px;height:16px;background:#c8c8c8"></div>
<div style="left:326px;top:242px;width:11px;height:11px;border:1px solid #8a8a8a;background:#fff;box-sizing:border-box"></div>
<span class="t" id="t76" style="left:344.4px;top:240.19px;font-size:11px;line-height:16px;color:#000;letter-spacing:-0.287px;">R.B. 60 GG. DF.FM.</span>
<span class="t" id="t77" style="left:544.4px;top:240.19px;font-size:11px;line-height:16px;color:#000;letter-spacing:-0.263px;">Standard</span>
<span class="t" id="t78" style="left:676.9px;top:240.19px;font-size:11px;line-height:16px;color:#000;letter-spacing:-0.244px;">Ricevuta bancaria</span>
<div style="left:322px;top:255px;width:19px;height:1px;background:#c4c4c4"></div>
<div style="left:342px;top:255px;width:814px;height:1px;background:#c8c8c8"></div>
<div style="left:541px;top:240px;width:1px;height:16px;background:#c8c8c8"></div>
<div style="left:674px;top:240px;width:1px;height:16px;background:#c8c8c8"></div>
<div style="left:774px;top:240px;width:1px;height:16px;background:#c8c8c8"></div>
<div style="left:888px;top:240px;width:1px;height:16px;background:#c8c8c8"></div>
<div style="left:955px;top:240px;width:1px;height:16px;background:#c8c8c8"></div>
<div style="left:1022px;top:240px;width:1px;height:16px;background:#c8c8c8"></div>
<div style="left:326px;top:258px;width:11px;height:11px;border:1px solid #8a8a8a;background:#fff;box-sizing:border-box"></div>
<span class="t" id="t79" style="left:344.4px;top:256.19px;font-size:11px;line-height:16px;color:#000;letter-spacing:-0.287px;">R.B. 90 GG. DF.FM.</span>
<span class="t" id="t80" style="left:544.4px;top:256.19px;font-size:11px;line-height:16px;color:#000;letter-spacing:-0.263px;">Standard</span>
<span class="t" id="t81" style="left:676.9px;top:256.19px;font-size:11px;line-height:16px;color:#000;letter-spacing:-0.244px;">Ricevuta bancaria</span>
<div style="left:322px;top:271px;width:19px;height:1px;background:#c4c4c4"></div>
<div style="left:342px;top:271px;width:814px;height:1px;background:#c8c8c8"></div>
<div style="left:541px;top:256px;width:1px;height:16px;background:#c8c8c8"></div>
<div style="left:674px;top:256px;width:1px;height:16px;background:#c8c8c8"></div>
<div style="left:774px;top:256px;width:1px;height:16px;background:#c8c8c8"></div>
<div style="left:888px;top:256px;width:1px;height:16px;background:#c8c8c8"></div>
<div style="left:955px;top:256px;width:1px;height:16px;background:#c8c8c8"></div>
<div style="left:1022px;top:256px;width:1px;height:16px;background:#c8c8c8"></div>
<div style="left:342px;top:272px;width:814px;height:15px;background:#00ff00"></div>
<div style="left:326px;top:274px;width:11px;height:11px;border:1px solid #8a8a8a;background:#fff;box-sizing:border-box"></div>
<svg style="position:absolute;left:326px;top:274px" width="11" height="11"><path d="M2.3 5.2 L4.5 8 L8.8 2.6" fill="none" stroke="#000" stroke-width="1.9"/></svg>
<span class="t" id="t82" style="left:344.4px;top:272.19px;font-size:11px;line-height:16px;color:#000;letter-spacing:-1.147px;">CONTRASSEGNO</span>
<span class="t" id="t83" style="left:544.4px;top:272.19px;font-size:11px;line-height:16px;color:#000;letter-spacing:-0.263px;">Standard</span>
<span class="t" id="t84" style="left:676.9px;top:272.19px;font-size:11px;line-height:16px;color:#000;letter-spacing:-0.371px;">Contrassegno</span>
<span class="t" id="t85" style="right:180.39999999999998px;top:272.19px;font-size:11px;line-height:16px;color:#000;letter-spacing:0.167px;">1'000,00</span>
<span class="t" id="t86" style="left:1025.2px;top:272.19px;font-size:11px;line-height:16px;color:#000;letter-spacing:-0.160px;">Privati</span>
<div style="left:322px;top:287px;width:19px;height:1px;background:#c4c4c4"></div>
<div style="left:342px;top:287px;width:814px;height:1px;background:#c8c8c8"></div>
<div style="left:541px;top:272px;width:1px;height:16px;background:#c8c8c8"></div>
<div style="left:674px;top:272px;width:1px;height:16px;background:#c8c8c8"></div>
<div style="left:774px;top:272px;width:1px;height:16px;background:#c8c8c8"></div>
<div style="left:888px;top:272px;width:1px;height:16px;background:#c8c8c8"></div>
<div style="left:955px;top:272px;width:1px;height:16px;background:#c8c8c8"></div>
<div style="left:1022px;top:272px;width:1px;height:16px;background:#c8c8c8"></div>
<div style="left:326px;top:290px;width:11px;height:11px;border:1px solid #8a8a8a;background:#fff;box-sizing:border-box"></div>
<span class="t" id="t87" style="left:344.4px;top:288.19px;font-size:11px;line-height:16px;color:#000;letter-spacing:-0.210px;">R.B. 45 DF.FM.</span>
<span class="t" id="t88" style="left:544.4px;top:288.19px;font-size:11px;line-height:16px;color:#000;letter-spacing:-0.263px;">Standard</span>
<span class="t" id="t89" style="left:676.9px;top:288.19px;font-size:11px;line-height:16px;color:#000;letter-spacing:-0.244px;">Ricevuta bancaria</span>
<div style="left:322px;top:303px;width:19px;height:1px;background:#c4c4c4"></div>
<div style="left:342px;top:303px;width:814px;height:1px;background:#c8c8c8"></div>
<div style="left:541px;top:288px;width:1px;height:16px;background:#c8c8c8"></div>
<div style="left:674px;top:288px;width:1px;height:16px;background:#c8c8c8"></div>
<div style="left:774px;top:288px;width:1px;height:16px;background:#c8c8c8"></div>
<div style="left:888px;top:288px;width:1px;height:16px;background:#c8c8c8"></div>
<div style="left:955px;top:288px;width:1px;height:16px;background:#c8c8c8"></div>
<div style="left:1022px;top:288px;width:1px;height:16px;background:#c8c8c8"></div>
<div style="left:326px;top:306px;width:11px;height:11px;border:1px solid #8a8a8a;background:#fff;box-sizing:border-box"></div>
<span class="t" id="t90" style="left:344.4px;top:304.19px;font-size:11px;line-height:16px;color:#000;letter-spacing:-0.333px;">ACCONTO 50% + SALDO BONIFICO ...</span>
<span class="t" id="t91" style="left:544.4px;top:304.19px;font-size:11px;line-height:16px;color:#000;letter-spacing:-0.263px;">Standard</span>
<span class="t" id="t92" style="left:676.9px;top:304.19px;font-size:11px;line-height:16px;color:#000;letter-spacing:-0.223px;">Bonifico</span>
<div style="left:322px;top:319px;width:19px;height:1px;background:#c4c4c4"></div>
<div style="left:342px;top:319px;width:814px;height:1px;background:#c8c8c8"></div>
<div style="left:541px;top:304px;width:1px;height:16px;background:#c8c8c8"></div>
<div style="left:674px;top:304px;width:1px;height:16px;background:#c8c8c8"></div>
<div style="left:774px;top:304px;width:1px;height:16px;background:#c8c8c8"></div>
<div style="left:888px;top:304px;width:1px;height:16px;background:#c8c8c8"></div>
<div style="left:955px;top:304px;width:1px;height:16px;background:#c8c8c8"></div>
<div style="left:1022px;top:304px;width:1px;height:16px;background:#c8c8c8"></div>
<div style="left:342px;top:320px;width:814px;height:15px;background:#00ff00"></div>
<div style="left:326px;top:322px;width:11px;height:11px;border:1px solid #8a8a8a;background:#fff;box-sizing:border-box"></div>
<svg style="position:absolute;left:326px;top:322px" width="11" height="11"><path d="M2.3 5.2 L4.5 8 L8.8 2.6" fill="none" stroke="#000" stroke-width="1.9"/></svg>
<span class="t" id="t93" style="left:344.4px;top:320.19px;font-size:11px;line-height:16px;color:#000;letter-spacing:-0.467px;">CARTA DI CREDITO</span>
<span class="t" id="t94" style="left:544.4px;top:320.19px;font-size:11px;line-height:16px;color:#000;letter-spacing:-0.242px;">PlainPay (Plugin)</span>
<span class="t" id="t95" style="left:676.9px;top:320.19px;font-size:11px;line-height:16px;color:#000;letter-spacing:-0.117px;">Carta di credito</span>
<div style="left:322px;top:335px;width:19px;height:1px;background:#c4c4c4"></div>
<div style="left:342px;top:335px;width:814px;height:1px;background:#c8c8c8"></div>
<div style="left:541px;top:320px;width:1px;height:16px;background:#c8c8c8"></div>
<div style="left:674px;top:320px;width:1px;height:16px;background:#c8c8c8"></div>
<div style="left:774px;top:320px;width:1px;height:16px;background:#c8c8c8"></div>
<div style="left:888px;top:320px;width:1px;height:16px;background:#c8c8c8"></div>
<div style="left:955px;top:320px;width:1px;height:16px;background:#c8c8c8"></div>
<div style="left:1022px;top:320px;width:1px;height:16px;background:#c8c8c8"></div>
<div style="left:326px;top:338px;width:11px;height:11px;border:1px solid #8a8a8a;background:#fff;box-sizing:border-box"></div>
<span class="t" id="t96" style="left:344.4px;top:336.19px;font-size:11px;line-height:16px;color:#000;letter-spacing:-0.311px;">Incasso PIXMANIA</span>
<span class="t" id="t97" style="left:544.4px;top:336.19px;font-size:11px;line-height:16px;color:#000;letter-spacing:-0.263px;">Standard</span>
<span class="t" id="t98" style="left:676.9px;top:336.19px;font-size:11px;line-height:16px;color:#000;letter-spacing:-0.355px;">Nessuna icona</span>
<div style="left:322px;top:351px;width:19px;height:1px;background:#c4c4c4"></div>
<div style="left:342px;top:351px;width:814px;height:1px;background:#c8c8c8"></div>
<div style="left:541px;top:336px;width:1px;height:16px;background:#c8c8c8"></div>
<div style="left:674px;top:336px;width:1px;height:16px;background:#c8c8c8"></div>
<div style="left:774px;top:336px;width:1px;height:16px;background:#c8c8c8"></div>
<div style="left:888px;top:336px;width:1px;height:16px;background:#c8c8c8"></div>
<div style="left:955px;top:336px;width:1px;height:16px;background:#c8c8c8"></div>
<div style="left:1022px;top:336px;width:1px;height:16px;background:#c8c8c8"></div>
<div style="left:326px;top:354px;width:11px;height:11px;border:1px solid #8a8a8a;background:#fff;box-sizing:border-box"></div>
<span class="t" id="t99" style="left:344.4px;top:352.19px;font-size:11px;line-height:16px;color:#000;letter-spacing:-0.112px;">R.B. 30 gg f.m. - 10 mese successivo</span>
<span class="t" id="t100" style="left:544.4px;top:352.19px;font-size:11px;line-height:16px;color:#000;letter-spacing:-0.263px;">Standard</span>
<span class="t" id="t101" style="left:676.9px;top:352.19px;font-size:11px;line-height:16px;color:#000;letter-spacing:-0.244px;">Ricevuta bancaria</span>
<div style="left:322px;top:367px;width:19px;height:1px;background:#c4c4c4"></div>
<div style="left:342px;top:367px;width:814px;height:1px;background:#c8c8c8"></div>
<div style="left:541px;top:352px;width:1px;height:16px;background:#c8c8c8"></div>
<div style="left:674px;top:352px;width:1px;height:16px;background:#c8c8c8"></div>
<div style="left:774px;top:352px;width:1px;height:16px;background:#c8c8c8"></div>
<div style="left:888px;top:352px;width:1px;height:16px;background:#c8c8c8"></div>
<div style="left:955px;top:352px;width:1px;height:16px;background:#c8c8c8"></div>
<div style="left:1022px;top:352px;width:1px;height:16px;background:#c8c8c8"></div>
<div style="left:326px;top:370px;width:11px;height:11px;border:1px solid #8a8a8a;background:#fff;box-sizing:border-box"></div>
<span class="t" id="t102" style="left:344.4px;top:368.19px;font-size:11px;line-height:16px;color:#000;letter-spacing:-0.240px;">Rimessa diretta 30GG DF ALLA QUIND...</span>
<span class="t" id="t103" style="left:544.4px;top:368.19px;font-size:11px;line-height:16px;color:#000;letter-spacing:-0.263px;">Standard</span>
<span class="t" id="t104" style="left:676.9px;top:368.19px;font-size:11px;line-height:16px;color:#000;letter-spacing:-0.117px;">Carta di credito</span>
<div style="left:322px;top:383px;width:19px;height:1px;background:#c4c4c4"></div>
<div style="left:342px;top:383px;width:814px;height:1px;background:#c8c8c8"></div>
<div style="left:541px;top:368px;width:1px;height:16px;background:#c8c8c8"></div>
<div style="left:674px;top:368px;width:1px;height:16px;background:#c8c8c8"></div>
<div style="left:774px;top:368px;width:1px;height:16px;background:#c8c8c8"></div>
<div style="left:888px;top:368px;width:1px;height:16px;background:#c8c8c8"></div>
<div style="left:955px;top:368px;width:1px;height:16px;background:#c8c8c8"></div>
<div style="left:1022px;top:368px;width:1px;height:16px;background:#c8c8c8"></div>
<div style="left:342px;top:384px;width:814px;height:15px;background:#00ff00"></div>
<div style="left:326px;top:386px;width:11px;height:11px;border:1px solid #8a8a8a;background:#fff;box-sizing:border-box"></div>
<svg style="position:absolute;left:326px;top:386px" width="11" height="11"><path d="M2.3 5.2 L4.5 8 L8.8 2.6" fill="none" stroke="#000" stroke-width="1.9"/></svg>
<span class="t" id="t105" style="left:344.4px;top:384.19px;font-size:11px;line-height:16px;color:#000;letter-spacing:-0.636px;">PAYPAL</span>
<span class="t" id="t106" style="left:544.4px;top:384.19px;font-size:11px;line-height:16px;color:#000;letter-spacing:-0.373px;">PayPal Express Checko...</span>
<span class="t" id="t107" style="left:676.9px;top:384.19px;font-size:11px;line-height:16px;color:#000;letter-spacing:-0.697px;">PayPal</span>
<span class="t" id="t108" style="right:180.39999999999998px;top:384.19px;font-size:11px;line-height:16px;color:#000;letter-spacing:0.160px;">500,00</span>
<div style="left:322px;top:399px;width:19px;height:1px;background:#c4c4c4"></div>
<div style="left:342px;top:399px;width:814px;height:1px;background:#c8c8c8"></div>
<div style="left:541px;top:384px;width:1px;height:16px;background:#c8c8c8"></div>
<div style="left:674px;top:384px;width:1px;height:16px;background:#c8c8c8"></div>
<div style="left:774px;top:384px;width:1px;height:16px;background:#c8c8c8"></div>
<div style="left:888px;top:384px;width:1px;height:16px;background:#c8c8c8"></div>
<div style="left:955px;top:384px;width:1px;height:16px;background:#c8c8c8"></div>
<div style="left:1022px;top:384px;width:1px;height:16px;background:#c8c8c8"></div>
<div style="left:326px;top:402px;width:11px;height:11px;border:1px solid #8a8a8a;background:#fff;box-sizing:border-box"></div>
<span class="t" id="t109" style="left:344.4px;top:400.19px;font-size:11px;line-height:16px;color:#000;letter-spacing:0.145px;">RB 60/90/120</span>
<span class="t" id="t110" style="left:544.4px;top:400.19px;font-size:11px;line-height:16px;color:#000;letter-spacing:-0.263px;">Standard</span>
<span class="t" id="t111" style="left:676.9px;top:400.19px;font-size:11px;line-height:16px;color:#000;letter-spacing:-0.355px;">Nessuna icona</span>
<div style="left:322px;top:415px;width:19px;height:1px;background:#c4c4c4"></div>
<div style="left:342px;top:415px;width:814px;height:1px;background:#c8c8c8"></div>
<div style="left:541px;top:400px;width:1px;height:16px;background:#c8c8c8"></div>
<div style="left:674px;top:400px;width:1px;height:16px;background:#c8c8c8"></div>
<div style="left:774px;top:400px;width:1px;height:16px;background:#c8c8c8"></div>
<div style="left:888px;top:400px;width:1px;height:16px;background:#c8c8c8"></div>
<div style="left:955px;top:400px;width:1px;height:16px;background:#c8c8c8"></div>
<div style="left:1022px;top:400px;width:1px;height:16px;background:#c8c8c8"></div>
<div style="left:326px;top:418px;width:11px;height:11px;border:1px solid #8a8a8a;background:#fff;box-sizing:border-box"></div>
<span class="t" id="t112" style="left:344.4px;top:416.19px;font-size:11px;line-height:16px;color:#000;letter-spacing:-0.008px;">Rimessa diretta 65 / 95 gg</span>
<span class="t" id="t113" style="left:544.4px;top:416.19px;font-size:11px;line-height:16px;color:#000;letter-spacing:-0.263px;">Standard</span>
<span class="t" id="t114" style="left:676.9px;top:416.19px;font-size:11px;line-height:16px;color:#000;letter-spacing:-0.355px;">Nessuna icona</span>
<div style="left:322px;top:431px;width:19px;height:1px;background:#c4c4c4"></div>
<div style="left:342px;top:431px;width:814px;height:1px;background:#c8c8c8"></div>
<div style="left:541px;top:416px;width:1px;height:16px;background:#c8c8c8"></div>
<div style="left:674px;top:416px;width:1px;height:16px;background:#c8c8c8"></div>
<div style="left:774px;top:416px;width:1px;height:16px;background:#c8c8c8"></div>
<div style="left:888px;top:416px;width:1px;height:16px;background:#c8c8c8"></div>
<div style="left:955px;top:416px;width:1px;height:16px;background:#c8c8c8"></div>
<div style="left:1022px;top:416px;width:1px;height:16px;background:#c8c8c8"></div>
<div style="left:326px;top:434px;width:11px;height:11px;border:1px solid #8a8a8a;background:#fff;box-sizing:border-box"></div>
<span class="t" id="t115" style="left:344.4px;top:432.19px;font-size:11px;line-height:16px;color:#000;letter-spacing:-0.467px;">CARTA DI CREDITO</span>
<span class="t" id="t116" style="left:544.4px;top:432.19px;font-size:11px;line-height:16px;color:#000;letter-spacing:-0.263px;">Standard</span>
<span class="t" id="t117" style="left:676.9px;top:432.19px;font-size:11px;line-height:16px;color:#000;letter-spacing:-0.355px;">Nessuna icona</span>
<div style="left:322px;top:447px;width:19px;height:1px;background:#c4c4c4"></div>
<div style="left:342px;top:447px;width:814px;height:1px;background:#c8c8c8"></div>
<div style="left:541px;top:432px;width:1px;height:16px;background:#c8c8c8"></div>
<div style="left:674px;top:432px;width:1px;height:16px;background:#c8c8c8"></div>
<div style="left:774px;top:432px;width:1px;height:16px;background:#c8c8c8"></div>
<div style="left:888px;top:432px;width:1px;height:16px;background:#c8c8c8"></div>
<div style="left:955px;top:432px;width:1px;height:16px;background:#c8c8c8"></div>
<div style="left:1022px;top:432px;width:1px;height:16px;background:#c8c8c8"></div>
<div style="left:326px;top:450px;width:11px;height:11px;border:1px solid #8a8a8a;background:#fff;box-sizing:border-box"></div>
<span class="t" id="t118" style="left:344.4px;top:448.19px;font-size:11px;line-height:16px;color:#000;letter-spacing:-0.079px;">R.B. 60 gg fine mese al 10 del mese s...</span>
<span class="t" id="t119" style="left:544.4px;top:448.19px;font-size:11px;line-height:16px;color:#000;letter-spacing:-0.263px;">Standard</span>
<span class="t" id="t120" style="left:676.9px;top:448.19px;font-size:11px;line-height:16px;color:#000;letter-spacing:-0.355px;">Nessuna icona</span>
<div style="left:322px;top:463px;width:19px;height:1px;background:#c4c4c4"></div>
<div style="left:342px;top:463px;width:814px;height:1px;background:#c8c8c8"></div>
<div style="left:541px;top:448px;width:1px;height:16px;background:#c8c8c8"></div>
<div style="left:674px;top:448px;width:1px;height:16px;background:#c8c8c8"></div>
<div style="left:774px;top:448px;width:1px;height:16px;background:#c8c8c8"></div>
<div style="left:888px;top:448px;width:1px;height:16px;background:#c8c8c8"></div>
<div style="left:955px;top:448px;width:1px;height:16px;background:#c8c8c8"></div>
<div style="left:1022px;top:448px;width:1px;height:16px;background:#c8c8c8"></div>
<div style="left:326px;top:466px;width:11px;height:11px;border:1px solid #8a8a8a;background:#fff;box-sizing:border-box"></div>
<span class="t" id="t121" style="left:344.4px;top:464.19px;font-size:11px;line-height:16px;color:#000;letter-spacing:-0.137px;">ACCONTO 30% + R.B. 30/60 GG DF....</span>
<span class="t" id="t122" style="left:544.4px;top:464.19px;font-size:11px;line-height:16px;color:#000;letter-spacing:-0.263px;">Standard</span>
<span class="t" id="t123" style="left:676.9px;top:464.19px;font-size:11px;line-height:16px;color:#000;letter-spacing:-0.355px;">Nessuna icona</span>
<div style="left:322px;top:479px;width:19px;height:1px;background:#c4c4c4"></div>
<div style="left:342px;top:479px;width:814px;height:1px;background:#c8c8c8"></div>
<div style="left:541px;top:464px;width:1px;height:16px;background:#c8c8c8"></div>
<div style="left:674px;top:464px;width:1px;height:16px;background:#c8c8c8"></div>
<div style="left:774px;top:464px;width:1px;height:16px;background:#c8c8c8"></div>
<div style="left:888px;top:464px;width:1px;height:16px;background:#c8c8c8"></div>
<div style="left:955px;top:464px;width:1px;height:16px;background:#c8c8c8"></div>
<div style="left:1022px;top:464px;width:1px;height:16px;background:#c8c8c8"></div>
<div style="left:326px;top:482px;width:11px;height:11px;border:1px solid #8a8a8a;background:#fff;box-sizing:border-box"></div>
<span class="t" id="t124" style="left:344.4px;top:480.19px;font-size:11px;line-height:16px;color:#000;letter-spacing:-0.102px;">R.B. 30/60/90 GG DF.FM. B1</span>
<span class="t" id="t125" style="left:544.4px;top:480.19px;font-size:11px;line-height:16px;color:#000;letter-spacing:-0.263px;">Standard</span>
<span class="t" id="t126" style="left:676.9px;top:480.19px;font-size:11px;line-height:16px;color:#000;letter-spacing:-0.244px;">Ricevuta bancaria</span>
<div style="left:322px;top:495px;width:19px;height:1px;background:#c4c4c4"></div>
<div style="left:342px;top:495px;width:814px;height:1px;background:#c8c8c8"></div>
<div style="left:541px;top:480px;width:1px;height:16px;background:#c8c8c8"></div>
<div style="left:674px;top:480px;width:1px;height:16px;background:#c8c8c8"></div>
<div style="left:774px;top:480px;width:1px;height:16px;background:#c8c8c8"></div>
<div style="left:888px;top:480px;width:1px;height:16px;background:#c8c8c8"></div>
<div style="left:955px;top:480px;width:1px;height:16px;background:#c8c8c8"></div>
<div style="left:1022px;top:480px;width:1px;height:16px;background:#c8c8c8"></div>
<div style="left:326px;top:498px;width:11px;height:11px;border:1px solid #8a8a8a;background:#fff;box-sizing:border-box"></div>
<span class="t" id="t127" style="left:344.4px;top:496.19px;font-size:11px;line-height:16px;color:#000;letter-spacing:-0.102px;">R.B. 30/60/90 GG DF.FM. B2</span>
<span class="t" id="t128" style="left:544.4px;top:496.19px;font-size:11px;line-height:16px;color:#000;letter-spacing:-0.263px;">Standard</span>
<span class="t" id="t129" style="left:676.9px;top:496.19px;font-size:11px;line-height:16px;color:#000;letter-spacing:-0.355px;">Nessuna icona</span>
<div style="left:322px;top:511px;width:19px;height:1px;background:#c4c4c4"></div>
<div style="left:342px;top:511px;width:814px;height:1px;background:#c8c8c8"></div>
<div style="left:541px;top:496px;width:1px;height:16px;background:#c8c8c8"></div>
<div style="left:674px;top:496px;width:1px;height:16px;background:#c8c8c8"></div>
<div style="left:774px;top:496px;width:1px;height:16px;background:#c8c8c8"></div>
<div style="left:888px;top:496px;width:1px;height:16px;background:#c8c8c8"></div>
<div style="left:955px;top:496px;width:1px;height:16px;background:#c8c8c8"></div>
<div style="left:1022px;top:496px;width:1px;height:16px;background:#c8c8c8"></div>
<div style="left:326px;top:514px;width:11px;height:11px;border:1px solid #8a8a8a;background:#fff;box-sizing:border-box"></div>
<span class="t" id="t130" style="left:344.4px;top:512.19px;font-size:11px;line-height:16px;color:#000;letter-spacing:-1.271px;">ASSEGNO</span>
<span class="t" id="t131" style="left:544.4px;top:512.19px;font-size:11px;line-height:16px;color:#000;letter-spacing:-0.263px;">Standard</span>
<span class="t" id="t132" style="left:676.9px;top:512.19px;font-size:11px;line-height:16px;color:#000;letter-spacing:-0.355px;">Nessuna icona</span>
<div style="left:322px;top:527px;width:19px;height:1px;background:#c4c4c4"></div>
<div style="left:342px;top:527px;width:814px;height:1px;background:#c8c8c8"></div>
<div style="left:541px;top:512px;width:1px;height:16px;background:#c8c8c8"></div>
<div style="left:674px;top:512px;width:1px;height:16px;background:#c8c8c8"></div>
<div style="left:774px;top:512px;width:1px;height:16px;background:#c8c8c8"></div>
<div style="left:888px;top:512px;width:1px;height:16px;background:#c8c8c8"></div>
<div style="left:955px;top:512px;width:1px;height:16px;background:#c8c8c8"></div>
<div style="left:1022px;top:512px;width:1px;height:16px;background:#c8c8c8"></div>
<div style="left:326px;top:530px;width:11px;height:11px;border:1px solid #8a8a8a;background:#fff;box-sizing:border-box"></div>
<span class="t" id="t133" style="left:344.4px;top:528.19px;font-size:11px;line-height:16px;color:#000;letter-spacing:-0.269px;">cvdfds</span>
<span class="t" id="t134" style="left:544.4px;top:528.19px;font-size:11px;line-height:16px;color:#000;letter-spacing:-0.263px;">Standard</span>
<span class="t" id="t135" style="left:676.9px;top:528.19px;font-size:11px;line-height:16px;color:#000;letter-spacing:-0.355px;">Nessuna icona</span>
<div style="left:322px;top:543px;width:19px;height:1px;background:#c4c4c4"></div>
<div style="left:342px;top:543px;width:814px;height:1px;background:#c8c8c8"></div>
<div style="left:541px;top:528px;width:1px;height:16px;background:#c8c8c8"></div>
<div style="left:674px;top:528px;width:1px;height:16px;background:#c8c8c8"></div>
<div style="left:774px;top:528px;width:1px;height:16px;background:#c8c8c8"></div>
<div style="left:888px;top:528px;width:1px;height:16px;background:#c8c8c8"></div>
<div style="left:955px;top:528px;width:1px;height:16px;background:#c8c8c8"></div>
<div style="left:1022px;top:528px;width:1px;height:16px;background:#c8c8c8"></div>
<div style="left:541px;top:544px;width:1px;height:16px;background:#c8c8c8"></div>
<div style="left:674px;top:544px;width:1px;height:16px;background:#c8c8c8"></div>
<div style="left:774px;top:544px;width:1px;height:16px;background:#c8c8c8"></div>
<div style="left:888px;top:544px;width:1px;height:16px;background:#c8c8c8"></div>
<div style="left:955px;top:544px;width:1px;height:16px;background:#c8c8c8"></div>
<div style="left:1022px;top:544px;width:1px;height:16px;background:#c8c8c8"></div>
<div style="left:1020px;top:106px;width:147px;height:476px;border:3px solid #ff0000;box-sizing:border-box;box-shadow:2px 2px 3px rgba(0,0,0,.36), inset 2px 2px 3px rgba(0,0,0,.36)"></div>
<span class="t" id="t136" style="left:348.5px;top:616.19px;font-size:11px;line-height:16px;color:#000;letter-spacing:-0.236px;">Vincoli pagamenti :</span>
<div style="left:449px;top:616px;width:512px;height:19px;border-top:1px solid #8e8e8e;border-left:1px solid #8e8e8e;border-right:1px solid #f4f4f4;border-bottom:1px solid #f4f4f4;box-sizing:border-box;background:#dcdcdc"></div>
<span class="t" id="t137" style="left:450px;top:616.19px;font-size:11px;line-height:16px;color:#000;letter-spacing:-0.126px;">Consenti di utilizzare solo i pagamenti associati ad un vettore specifico</span>
<div style="left:967px;top:615px;width:25px;height:23px;background:#dcdcdc;border-top:1px solid #f6f6f6;border-left:1px solid #f6f6f6;border-right:1px solid #888;border-bottom:1px solid #bcbcbc;box-sizing:border-box;box-shadow:inset 1px 1px 0 #e2e2ea"></div>
<svg style="position:absolute;left:971px;top:617px" width="16" height="16" viewBox="0 0 16 16">
<defs><linearGradient id="fg2" x1="0" y1="0" x2="0" y2="1"><stop offset="0" stop-color="#fff8d0"/><stop offset=".45" stop-color="#ffec80"/><stop offset="1" stop-color="#ffd820"/></linearGradient></defs>
<path d="M8.5 3.5 H10.5 V1.5 H14.5 V11.5 L9 12.5 Z" fill="#fffbe8" stroke="#d49c00" stroke-width="1.1" stroke-linejoin="round"/>
<path d="M1.5 7 L4.5 6 L4.5 13.5 L2.5 12 Z" fill="#fff2a8" stroke="#d49c00" stroke-width="1.1" stroke-linejoin="round"/>
<path d="M4.5 4.5 H11.5 L12.5 6 L13.5 11.5 L4.5 14.5 Z" fill="url(#fg2)" stroke="#d49c00" stroke-width="1.1" stroke-linejoin="round"/>
</svg>
</body></html>
